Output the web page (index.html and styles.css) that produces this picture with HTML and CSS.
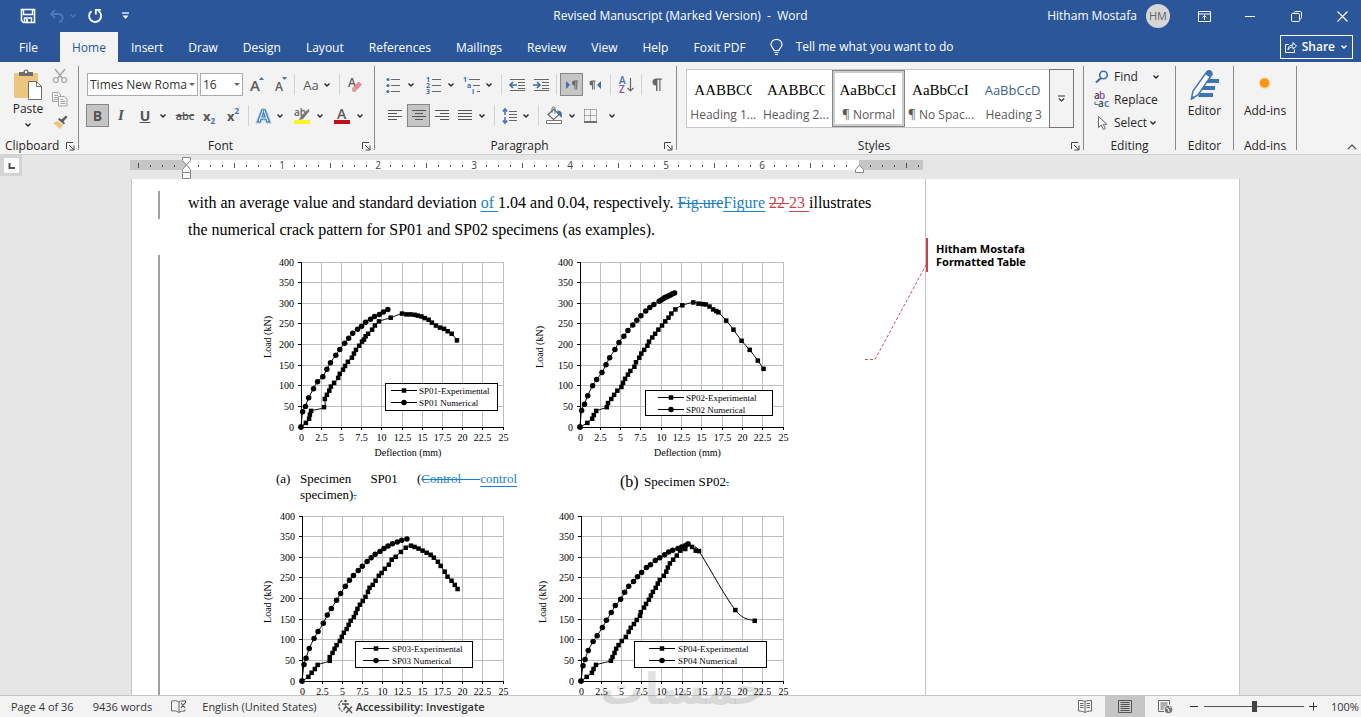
FILE: index.html
```html
<!DOCTYPE html>
<html lang="en">
<head>
<meta charset="utf-8">
<title>Revised Manuscript (Marked Version) - Word</title>
<link rel="stylesheet" href="styles.css">
</head>
<body>
<svg class="defs" aria-hidden="true">
  <symbol id="chev" viewBox="0 0 8 6"><path d="M1.5 1.5 4 4 6.5 1.5" fill="none" stroke="currentColor" stroke-width="1.4"/></symbol>
  <symbol id="launch" viewBox="0 0 9 9"><path d="M.5 7V.5H7M3 3l4.500 4.500M8 3.500V8H3.500" fill="none" stroke="#444"/></symbol>
</svg>

<header class="titlebar">
  <div class="quick">
    <button class="qbtn" aria-label="Save"><svg width="16" height="16" viewBox="0 0 16 16"><path d="M1.500 1.500h13v13h-11l-2-2z" fill="none" stroke="#fff" stroke-width="1.600"/><path d="M3.500 2v4.500h9V2M4.500 14v-4h7v4" fill="none" stroke="#fff" stroke-width="1.400"/><path d="M6 11h2v3H6z" fill="#fff"/></svg></button>
    <button class="qbtn undo" aria-label="Undo"><svg width="16" height="14" viewBox="0 0 16 14"><path d="M6 1 2 5l4 4M2 5h7c6 0 6 7 1 8" fill="none" stroke="#4f78b8" stroke-width="1.800"/></svg></button>
    <button class="qbtn mini" aria-label="Undo list"><svg width="8" height="6"><use href="#chev"/></svg></button>
    <button class="qbtn redo" aria-label="Repeat"><svg width="16" height="16" viewBox="0 0 16 16"><path d="M4.500 3.200A6 6 0 1 0 11.500 3" fill="none" stroke="#fff" stroke-width="1.900"/><path d="M8.800 6.500V1.800h5" fill="none" stroke="#fff" stroke-width="1.800"/></svg></button>
    <button class="qbtn custom" aria-label="Customize"><svg width="7" height="8" viewBox="0 0 7 8"><path d="M0 1h7" stroke="#fff" stroke-width="1.300"/><path d="M.5 3.500h6L3.500 7z" fill="#fff"/></svg></button>
  </div>
  <h1 class="doctitle">Revised Manuscript (Marked Version)&nbsp; -&nbsp; Word</h1>
  <div class="winctl">
    <span class="user">Hitham Mostafa</span><span class="avatar">HM</span>
    <button class="wbtn" aria-label="Ribbon display"><svg width="13" height="11" viewBox="0 0 13 11"><path d="M.5.5h12v10H.5zM.5 3h12M6.500 9V4.500M4.500 6.500l2-2 2 2" fill="none" stroke="#fff"/></svg></button>
    <button class="wbtn" aria-label="Minimize"><svg width="11" height="11" viewBox="0 0 11 11"><path d="M0 5.500h10" stroke="#fff"/></svg></button>
    <button class="wbtn" aria-label="Restore"><svg width="11" height="11" viewBox="0 0 11 11"><rect x=".5" y="2.500" width="8" height="8" rx="1" fill="none" stroke="#fff"/><path d="M3 2.500C3 1 3.500.5 4.500.5H9c1 0 1.500.5 1.500 1.500v4.500c0 1-.5 1.500-2 1.500" fill="none" stroke="#fff"/></svg></button>
    <button class="wbtn close" aria-label="Close"><svg width="11" height="11" viewBox="0 0 11 11"><path d="M.5.5l10 10M10.500.5l-10 10" stroke="#fff" stroke-width="1.100"/></svg></button>
  </div>
</header>

<nav class="tabs">
  <button class="tab file">File</button>
  <button class="tab on">Home</button>
  <button class="tab">Insert</button>
  <button class="tab">Draw</button>
  <button class="tab">Design</button>
  <button class="tab">Layout</button>
  <button class="tab">References</button>
  <button class="tab">Mailings</button>
  <button class="tab">Review</button>
  <button class="tab">View</button>
  <button class="tab">Help</button>
  <button class="tab">Foxit PDF</button>
  <button class="tell"><svg width="13" height="17" viewBox="0 0 13 17"><path d="M4 11.500C4 9 1 8.500 1 5.500a5.300 5 0 0 1 11 0C12 8.500 9 9 9 11.500zM4.500 13.500h4M5 15.500h3" fill="none" stroke="#fff" stroke-width="1.200"/></svg>Tell me what you want to do</button>
  <button class="share"><svg width="12" height="12" viewBox="0 0 12 12"><path d="M3.500 3.500h-3v8h9v-3M3 9c0-3.500 2-5 5-5V1.500L11.500 5 8 8V6C6 6 4 6.500 3 9z" fill="none" stroke="#fff"/></svg>Share<svg width="8" height="6"><use href="#chev"/></svg></button>
</nav>

<section class="ribbon">
  <div class="group clip">
    <div class="clipbody">
      <button class="paste"><svg width="30" height="31" viewBox="0 0 30 31"><rect x="1" y="4" width="24" height="25" rx="1" fill="#ecc67f"/><path d="M6 7V3h4.500a2.500 2.500 0 0 1 5 0H20v4z" fill="#6d6d6d"/><circle cx="13" cy="3" r="1.200" fill="#f3f3f3"/><path d="M15.500 12.500h8l5 5v13h-13z" fill="#fff" stroke="#6d6d6d"/><path d="M23.500 12.500v5h5" fill="none" stroke="#6d6d6d"/></svg>Paste<svg width="8" height="6"><use href="#chev"/></svg></button>
      <div class="clipside">
        <button aria-label="Cut"><svg width="16" height="16" viewBox="0 0 16 16"><path d="M3 1l7.500 9.500M13 1 5.500 10.500" stroke="#a5a5a5" stroke-width="1.500"/><circle cx="3.800" cy="12" r="2.500" fill="none" stroke="#a5a5a5" stroke-width="1.200"/><circle cx="12.200" cy="12" r="2.500" fill="none" stroke="#a5a5a5" stroke-width="1.200"/></svg></button>
        <button aria-label="Copy"><svg width="16" height="15" viewBox="0 0 16 15"><path d="M.5.5h6l2 2v7h-8z" fill="#f3f3f3" stroke="#a5a5a5"/><path d="M2 3.500h4M2 5.500h4M2 7.500h4" stroke="#a5a5a5"/><path d="M6.500 4.500h6l2.500 2.500v7H6.500z" fill="#f3f3f3" stroke="#a5a5a5"/><path d="M8.500 7.500h3M8.500 9.500h5M8.500 11.500h5" stroke="#a5a5a5"/></svg></button>
        <button aria-label="Format Painter"><svg width="16" height="14" viewBox="0 0 16 14"><path d="M1 8l5-2 5 4-3 4z" fill="#ecc67f"/><path d="M6 4.500l6 5 1-1.500-1.500-1.500L15.500 2 14 .5 9.500 4.500 7.500 3z" fill="#5d5d5d"/></svg></button>
      </div>
    </div>
    <div class="glabel"><span>Clipboard</span><svg width="9" height="9"><use href="#launch"/></svg></div>
  </div>

  <div class="group font">
    <div class="rows">
      <div class="row">
        <label class="combo name"><select aria-label="Font"><option>Times New Roma</option></select></label>
        <label class="combo size"><select aria-label="Font size"><option>16</option></select></label>
        <button class="ib" aria-label="Grow font"><svg width="16" height="18" viewBox="0 0 16 18"><text x="1" y="15" class="ico15">A</text><path d="M10 4l2.500-3L15 4z" fill="#3f6fb0"/></svg></button>
        <button class="ib" aria-label="Shrink font"><svg width="16" height="18" viewBox="0 0 16 18"><text x="2" y="15" class="ico12">A</text><path d="M9 1l2.500 3L14 1z" fill="#3f6fb0"/></svg></button>
        <i class="sep flush"></i>
        <button class="ib case"><span>Aa</span><svg width="8" height="6"><use href="#chev"/></svg></button>
        <i class="sep"></i>
        <button class="ib" aria-label="Clear formatting"><svg width="16" height="18" viewBox="0 0 16 18"><text x="1" y="11" class="ico12">A</text><path d="M5 12.500l6.500-7 3.500 3-7 7.500-2.500-.5z" fill="#e8899a"/><path d="M5 12.500l2-2 3 3-2 2.500-2.500-.5z" fill="#d8a0aa"/></svg></button>
      </div>
      <div class="row">
        <button class="ib on"><b>B</b></button>
        <button class="ib ital"><i>I</i></button>
        <button class="ib und"><u>U</u></button>
        <button class="cv" aria-label="Underline style"><svg width="8" height="6"><use href="#chev"/></svg></button>
        <button class="ib gap strike"><s>abc</s></button>
        <button class="ib idx">x<sub>2</sub></button>
        <button class="ib idx">x<sup>2</sup></button>
        <i class="sep"></i>
        <button class="ib nar" aria-label="Text effects"><svg width="15" height="16" viewBox="0 0 15 16"><path d="M1.500 14 6 2h3l4.500 12h-2.500l-1-3h-5l-1 3zM5.800 9h3.400L7.500 4z" fill="#fff" stroke="#a9c8e8" stroke-width="3"/><path d="M1.500 14 6 2h3l4.500 12h-2.500l-1-3h-5l-1 3zM5.800 9h3.400L7.500 4z" fill="#fff" stroke="#3d78b8" stroke-width="1.200"/></svg></button>
        <button class="cv" aria-label="Effects list"><svg width="8" height="6"><use href="#chev"/></svg></button>
        <button class="ib gap" aria-label="Highlight"><svg width="18" height="18" viewBox="0 0 18 18"><text x="1" y="9" class="ico10">ab</text><path d="M15.500 2 8 9l-2 4 4-1 6.500-8z" fill="#777"/><path d="M1 13h16v4H1z" fill="#fdf424"/></svg></button>
        <button class="cv" aria-label="Highlight colors"><svg width="8" height="6"><use href="#chev"/></svg></button>
        <button class="ib gap" aria-label="Font color"><svg width="18" height="18" viewBox="0 0 18 18"><text x="4" y="12" class="ico14">A</text><path d="M1 13h16v4H1z" fill="#c00f14"/></svg></button>
        <button class="cv" aria-label="Font colors"><svg width="8" height="6"><use href="#chev"/></svg></button>
      </div>
    </div>
    <div class="glabel"><span>Font</span><svg width="9" height="9"><use href="#launch"/></svg></div>
  </div>

  <div class="group para">
    <div class="rows">
      <div class="row">
        <button class="ib" aria-label="Bullets"><svg width="14" height="16" viewBox="0 0 14 16"><path d="M5 2.500h9M5 8.500h9M5 14.500h9" stroke="#666"/><circle cx="2" cy="2.500" r="1.500" fill="#3f6fb0"/><circle cx="2" cy="8.500" r="1.500" fill="#3f6fb0"/><circle cx="2" cy="14.500" r="1.500" fill="#3f6fb0"/></svg></button>
        <button class="cv" aria-label="Bullet library"><svg width="8" height="6"><use href="#chev"/></svg></button>
        <button class="ib gap" aria-label="Numbering"><svg width="15" height="18" viewBox="0 0 15 18"><path d="M6 3.500h9M6 9.500h9M6 15.500h9" stroke="#666"/><g class="num"><text x="0" y="6">1</text><text x="0" y="12">2</text><text x="0" y="18">3</text></g></svg></button>
        <button class="cv" aria-label="Numbering library"><svg width="8" height="6"><use href="#chev"/></svg></button>
        <button class="ib gap nar" aria-label="Multilevel list"><svg width="18" height="18" viewBox="0 0 18 18"><path d="M6 3.500h11M10 9.500h7M14 15.500h3" stroke="#666"/><g class="num"><text x="0" y="6">1</text><text x="4" y="12">a</text><text x="9" y="18">i</text></g></svg></button>
        <button class="cv" aria-label="Multilevel library"><svg width="8" height="6"><use href="#chev"/></svg></button>
        <i class="sep wide"></i>
        <button class="ib" aria-label="Decrease indent"><svg width="17" height="14" viewBox="0 0 17 14"><path d="M1 1.500h15M9 4.500h7M9 7.500h7M9 10.500h7M1 12.500h15" stroke="#666"/><path d="M1 7h7M4 4 1 7l3 3" fill="none" stroke="#3f6fb0" stroke-width="1.700"/></svg></button>
        <button class="ib" aria-label="Increase indent"><svg width="17" height="14" viewBox="0 0 17 14"><path d="M1 1.500h15M9 4.500h7M9 7.500h7M9 10.500h7M1 12.500h15" stroke="#666"/><path d="M0 7h7M4 4l3 3-3 3" fill="none" stroke="#3f6fb0" stroke-width="1.700"/></svg></button>
        <i class="sep"></i>
        <button class="ib on" aria-label="Left to right"><svg width="14" height="12" viewBox="0 0 14 12"><path d="M1 2v8l4-4z" fill="#3f6fb0"/><path d="M9.500 6.500a2.500 2.500 0 0 1 0-5H13v1h-.8v8h-1v-8h-.7v8h-1z" fill="#666"/></svg></button>
        <button class="ib" aria-label="Right to left"><svg width="14" height="12" viewBox="0 0 14 12"><path d="M13 2v8L9 6z" fill="#3f6fb0"/><path d="M4 6.500a2.500 2.500 0 0 1 0-5h3.500v1h-.8v8h-1v-8H5v8H4z" fill="#666"/></svg></button>
        <i class="sep"></i>
        <button class="ib" aria-label="Sort"><svg width="15" height="18" viewBox="0 0 15 18"><text x="0" y="8" class="sa">A</text><text x="0" y="17" class="sz">Z</text><path d="M11.500 2v13M8.500 12l3 3 3-3" fill="none" stroke="#666" stroke-width="1.200"/></svg></button>
        <i class="sep"></i>
        <button class="ib" aria-label="Show marks"><svg width="12" height="13" viewBox="0 0 12 13"><path d="M5 7.500A3.500 3.500 0 0 1 5 .5h6v1.200H9.500V13H8.300V1.700H6.500V13H5z" fill="#666"/></svg></button>
      </div>
      <div class="row inset">
        <button class="ib" aria-label="Align left"><svg width="14" height="13" viewBox="0 0 14 13"><path d="M0 1.500h14M0 4.500h9M0 7.500h14M0 10.500h9" stroke="#555"/></svg></button>
        <button class="ib on" aria-label="Center"><svg width="14" height="13" viewBox="0 0 14 13"><path d="M0 1.500h14M3 4.500h8M0 7.500h14M3 10.500h8" stroke="#555"/></svg></button>
        <button class="ib" aria-label="Align right"><svg width="14" height="13" viewBox="0 0 14 13"><path d="M0 1.500h14M5 4.500h9M0 7.500h14M5 10.500h9" stroke="#555"/></svg></button>
        <button class="ib nar" aria-label="Justify"><svg width="14" height="13" viewBox="0 0 14 13"><path d="M0 1.500h14M0 4.500h14M0 7.500h14M0 10.500h14" stroke="#555"/></svg></button>
        <button class="cv" aria-label="Justify options"><svg width="8" height="6"><use href="#chev"/></svg></button>
        <i class="sep wide"></i>
        <button class="ib nar" aria-label="Line spacing"><svg width="15" height="16" viewBox="0 0 15 16"><path d="M7 3.500h8M7 6.500h8M7 9.500h8M7 12.500h8" stroke="#666"/><path d="M3 1v6M3 9v6M.8 3.500 3 1l2.200 2.500M.8 12.500 3 15l2.200-2.500" fill="none" stroke="#3f6fb0" stroke-width="1.500"/></svg></button>
        <button class="cv" aria-label="Spacing options"><svg width="8" height="6"><use href="#chev"/></svg></button>
        <i class="sep wide"></i>
        <button class="ib" aria-label="Shading"><svg width="17" height="17" viewBox="0 0 17 17"><path d="M2 7.500 8 2l5 5.500-5.500 5z" fill="#fff" stroke="#666" stroke-width="1.200"/><path d="M6 6V1.500a1.500 1.500 0 0 1 3 0V7" fill="none" stroke="#666"/><path d="M11 3.500c5 0 5.500 3 4.500 7.500l-2.500-3z" fill="#3f6fb0"/><path d="M.5 13.500h15v3H.5z" fill="#fff" stroke="#777"/></svg></button>
        <button class="cv" aria-label="Shading colors"><svg width="8" height="6"><use href="#chev"/></svg></button>
        <button class="ib" aria-label="Borders"><svg width="13" height="14" viewBox="0 0 13 14"><path d="M.5.5h12M.5 6.500h12M.5.5v12M6.500.5v12M12.500.5v12" fill="none" stroke="#666" stroke-dasharray="1 1"/><path d="M0 13h13" stroke="#444" stroke-width="1.500"/></svg></button>
        <button class="cv gap" aria-label="Border options"><svg width="8" height="6"><use href="#chev"/></svg></button>
      </div>
    </div>
    <div class="glabel"><span>Paragraph</span><svg width="9" height="9"><use href="#launch"/></svg></div>
  </div>

  <div class="group styles">
    <div class="gallery">
      <button class="style"><span class="prev">AABBCC</span><span class="sname">Heading 1...</span></button>
      <button class="style"><span class="prev">AABBCC</span><span class="sname">Heading 2...</span></button>
      <button class="style on"><span class="prev">AaBbCcI</span><span class="sname">¶ Normal</span></button>
      <button class="style"><span class="prev">AaBbCcI</span><span class="sname">¶ No Spac...</span></button>
      <button class="style"><span class="prev light">AaBbCcD</span><span class="sname">Heading 3</span></button>
      <button class="more" aria-label="More styles"><svg width="9" height="8" viewBox="0 0 9 8"><path d="M1 1h7M1.800 3.500l2.700 2.500 2.700-2.500" fill="none" stroke="#333" stroke-width="1.200"/></svg></button>
    </div>
    <div class="glabel"><span>Styles</span><svg width="9" height="9"><use href="#launch"/></svg></div>
  </div>

  <div class="group editing">
    <div class="elist">
      <button><svg width="16" height="14" viewBox="0 0 16 14"><circle cx="9.500" cy="5" r="3.800" fill="none" stroke="#3f6fb0" stroke-width="1.600"/><path d="M7 8l-5 4.500" stroke="#3f6fb0" stroke-width="2.200"/></svg><span class="find">Find</span><svg width="8" height="6"><use href="#chev"/></svg></button>
      <button><svg width="16" height="16" viewBox="0 0 16 16"><text x="0" y="7" class="ra">a</text><text x="5" y="7" class="rb">b</text><text x="4" y="15" class="ra">a</text><text x="10" y="15" class="rc">c</text><path d="M1 9.500v3h3" fill="none" stroke="#3f6fb0"/></svg>Replace</button>
      <button><svg width="16" height="16" viewBox="0 0 16 16"><path d="M4.500 1.500v11l2.800-2.500 2 4.500 2-1-2-4.300h3.500z" fill="#fff" stroke="#666"/></svg>Select<svg class="near" width="8" height="6"><use href="#chev"/></svg></button>
    </div>
    <div class="glabel"><span>Editing</span></div>
  </div>

  <div class="group editor">
    <button class="big"><svg width="32" height="32" viewBox="0 0 32 32"><path d="M17 10h13v4H15zM14 17h12v4H12zM11 24h13v4H9z" fill="#3f74b5"/><path d="M2.500 29.500 4 22 18 2.500c3-1.500 5 0 5 3L9 26z" fill="#fff" stroke="#3f74b5" stroke-width="1.500"/><path d="M16 5l2.500-3.500c3-1 5 .5 5 3.500L21 8.500z" fill="#3f74b5"/><path d="M2 31l1-4 3 2z" fill="#3f74b5"/></svg>Editor</button>
    <div class="glabel"><span>Editor</span></div>
  </div>

  <div class="group addins">
    <button class="big"><svg width="32" height="32" viewBox="0 0 32 32"><circle cx="15.500" cy="14" r="5.800" fill="#fbd6a0"/><circle cx="15.500" cy="14" r="4.600" fill="#f99514"/></svg>Add-ins</button>
    <div class="glabel"><span>Add-ins</span></div>
  </div>
  <button class="collapse" aria-label="Collapse ribbon"><svg width="10" height="6" viewBox="0 0 10 6"><path d="M.8 5.200 5 1l4.200 4.200" fill="none" stroke="#444" stroke-width="1.200"/></svg></button>
</section>

<div class="rulerbar">
  <button class="tabsel" aria-label="Tab selector"><svg width="15" height="15" viewBox="0 0 15 15"><rect width="15" height="15" fill="#fafafa"/><path d="M5.500 5v5H11" fill="none" stroke="#555" stroke-width="2"/></svg></button>
  <svg class="ruler" id="ruler" width="794" height="24"></svg>
</div>

<main class="desk">
  <article class="page">
    <div class="body">
      <p class="text">with an average value and standard deviation <ins class="blue">of </ins>1.04 and 0.04, respectively. <del class="blue">Fig.ure</del><ins class="blue">Figure</ins> <del class="red">22 </del><ins class="red">23 </ins>illustrates the numerical crack pattern for SP01 and SP02 specimens (as examples).</p>
      <div class="figures">
        <svg class="chart" data-chart="0" width="280" height="210"></svg>
        <svg class="chart" data-chart="1" width="280" height="210"></svg>
        <div class="caption"><span>(a)</span><p>Specimen SP01 (<del class="blue">Control </del><ins class="blue">control</ins> specimen)<del class="blue">.</del></p></div>
        <div class="caption b"><span>(b)</span><p>Specimen SP02<del class="blue">.</del></p></div>
        <svg class="chart" data-chart="2" width="280" height="210"></svg>
        <svg class="chart" data-chart="3" width="280" height="210"></svg>
      </div>
    </div>
    <aside class="markup">
      <svg class="leader" width="64" height="100" viewBox="0 0 64 100"><path d="M0 97.500h10L61 3" fill="none" stroke="#c8505a" stroke-dasharray="3 2"/></svg>
      <div class="note">Hitham Mostafa<br>Formatted Table</div>
    </aside>
  </article>
</main>

<footer class="status">
  <span class="pg">Page 4 of 36</span>
  <span class="wc">9436 words</span>
  <button class="proof" aria-label="Proofing"><svg width="15" height="13" viewBox="0 0 15 13"><path d="M8 12.500V2C6 .5 3 .5.5 1v10c3-.5 5.500 0 7.500 1.500 1-1 3-1.500 6-1.500V9.500M8 2c1-.8 2-1 3-1" fill="none" stroke="#666"/><path d="M10 3l4 5M14 3l-4 5M11 1h3.500v2" fill="none" stroke="#555" stroke-width="1.200"/></svg></button>
  <span class="lang">English (United States)</span>
  <button class="acc"><svg width="16" height="15" viewBox="0 0 16 15"><path d="M5.500 1.500A6 6 0 0 0 5.500 12.500" fill="none" stroke="#555" stroke-width="1.200" stroke-dasharray="3 1"/><circle cx="8.500" cy="2" r="1.300" fill="#555"/><path d="M5 5h7M8.500 5v3l-2 3M9 7.500l6 6.500M15 7.500l-6 6.500" fill="none" stroke="#555" stroke-width="1.400"/></svg>Accessibility: Investigate</button>
  <div class="views">
    <button aria-label="Read mode"><svg width="14" height="13" viewBox="0 0 14 13"><path d="M7 12.500V1.500C5 .5 3 .5.5.5v10.500c3 0 5 .5 6.500 1.500 1.500-1 3.500-1.500 6.500-1.500V.5C11 .5 9 .5 7 1.500M2 3.500h3.500M2 5.500h3.500M2 7.500h3.500M8.500 3.500H12M8.500 5.500H12M8.500 7.500H12" fill="none" stroke="#666"/></svg></button>
    <button class="on" aria-label="Print layout"><svg width="14" height="13" viewBox="0 0 14 13"><path d="M.5.5h13v12H.5zM2.500 2.500h9M2.500 4.500h9M2.500 6.500h9M2.500 8.500h9M2.500 10.500h9" fill="none" stroke="#555"/></svg></button>
    <button aria-label="Web layout"><svg width="15" height="14" viewBox="0 0 15 14"><path d="M6 11.500H.5v-11h11v4M2.500 3h7M2.500 5h7M2.500 7h4M2.500 9h3" fill="none" stroke="#666"/><circle cx="10.500" cy="9.500" r="3.800" fill="#777"/><path d="M8 8l2.500 1 .5 3M11 6.500l2 1.500" fill="none" stroke="#f3f3f3"/></svg></button>
  </div>
  <button class="zb" aria-label="Zoom out"><svg width="9" height="9" viewBox="0 0 9 9"><path d="M0 4.500h8" stroke="#333"/></svg></button>
  <input class="zoom" type="range" min="0" max="100" value="50" aria-label="Zoom">
  <button class="zb" aria-label="Zoom in"><svg width="9" height="9" viewBox="0 0 9 9"><path d="M0 4.500h8M4.500.5v8" stroke="#333"/></svg></button>
  <span class="pct">100%</span>
</footer>
<div class="watermark" lang="ar" dir="rtl">خمسات</div>
<script src="script.js"></script>
</body>
</html>
```
FILE: styles.css
```css
* { box-sizing: border-box; }
body {
  margin: 0;
  height: 100vh;
  display: flex;
  flex-direction: column;
  overflow: hidden;
  font: 12px/16px "Open Sans", "Noto Sans", sans-serif;
  color: #333;
  background: #e6e6e6;
}
button {
  margin: 0;
  padding: 0;
  border: 0;
  background: none;
  font: inherit;
  color: inherit;
  display: flex;
  align-items: center;
  justify-content: center;
  white-space: nowrap;
}
svg { display: block; flex: none; overflow: visible; }
.defs { position: absolute; width: 0; height: 0; overflow: hidden; }

/* title bar */
.titlebar {
  display: grid;
  grid-template-columns: 1fr auto 1fr;
  flex: none;
  height: 32px;
  align-items: center;
  background: #2b579a;
  color: #fff;
}
.quick { display: flex; align-items: center; padding-left: 16px; height: 30px; }
.qbtn { width: 24px; height: 24px; }
.qbtn.undo { margin-left: 5px; }
.qbtn.mini { width: 8px; color: #4f78b8; }
.qbtn.redo { margin-left: 6px; }
.qbtn.custom { margin-left: 6px; }
.doctitle { margin: 0; font-size: 12px; font-weight: 400; }
.winctl { display: flex; justify-content: flex-end; align-items: center; height: 30px; }
.user { margin-right: 9px; }
.avatar {
  width: 24px;
  height: 24px;
  margin-right: 11px;
  border-radius: 50%;
  background: #d6d6d6;
  color: #666;
  font-size: 11px;
  line-height: 24px;
  text-align: center;
}
.wbtn { width: 46px; height: 26px; }
.wbtn.close { width: 42px; padding-left: 4px; }

/* ribbon tabs */
.tabs {
  display: flex;
  flex: none;
  gap: 1px;
  height: 30px;
  padding: 0 8px 0 7px;
  background: #2b579a;
  color: #fff;
}
.tab { height: 30px; padding: 2px 12px 0; }
.tab.file { margin-right: 9px; }
.tab.on { background: #f3f3f3; color: #2b579a; }
.tell { gap: 13px; margin-left: 11px; }
.share {
  align-self: center;
  gap: 5px;
  height: 24px;
  margin-left: auto;
  padding: 0 4px;
  border: 1px solid #fff;
  font-weight: 600;
}

/* ribbon */
.ribbon {
  display: flex;
  flex: none;
  height: 93px;
  padding: 4px 0;
  background: #f3f3f3;
  border-bottom: 1px solid #d2d2d2;
  color: #262626;
}
.group {
  display: flex;
  flex-direction: column;
  justify-content: space-between;
  flex: none;
  border-right: 1px solid #8a8a8a;
}
.glabel { display: flex; align-items: center; height: 8px; padding: 0 3px 0 0; }
.glabel span { flex: 1; text-align: center; }
.clip { width: 79px; }
.clip .glabel { padding-left: 5px; }
.clip .glabel span { text-align: left; }
.font { width: 296px; }
.para { width: 302px; }
.styles { width: 407px; }
.editing { width: 92px; }
.editor { width: 58px; }
.addins { width: 63px; }
.editing .glabel, .editor .glabel, .addins .glabel { padding: 0; }

.clipbody { display: flex; gap: 8px; padding: 2px 0 0 12px; }
.paste { flex-direction: column; width: 32px; gap: 1px; }
.paste svg:last-child { margin-top: 4px; }
.clipside { display: flex; flex-direction: column; gap: 8px; }

.rows { display: flex; flex-direction: column; gap: 8px; padding: 7px 0 0 7px; }
.row { display: flex; align-items: center; height: 23px; }
.row.inset { padding-left: 2px; }
.para .rows { padding-left: 6px; }
.ib { width: 24px; height: 23px; color: #555; }
.ib.nar { width: 22px; }
.ib.on { width: 23px; background: #c5c5c5; border: 1px solid #868686; }
.ib.gap { margin-left: 4px; }
.cv { width: 12px; height: 23px; }
.cv.gap { margin-left: 4px; }
.sep { width: 1px; height: 21px; margin: 0 3px; background: #d2d2d2; }
.sep.flush { margin-left: 1px; }
.sep.wide { margin-left: 6px; }
.combo { position: relative; height: 23px; margin-right: 2px; }
.combo.name { width: 111px; margin-left: 1px; }
.combo.size { width: 43px; }
.combo select {
  width: 100%;
  height: 23px;
  padding: 0 0 0 2px;
  border: 1px solid #ababab;
  border-radius: 0;
  background: #fff;
  appearance: none;
  font: inherit;
  color: #333;
}
.combo::after {
  content: "";
  position: absolute;
  right: 3px;
  top: 10px;
  border: 3px solid transparent;
  border-top-color: #666;
}
.case { width: 38px; gap: 4px; font-size: 13px; }
.case svg { color: #262626; }
.ital { font: italic bold 15px "Liberation Serif", serif; }
.ib b, .und { font-size: 14px; font-weight: 700; }
.strike { font-size: 11px; font-weight: 600; }
.idx { font-size: 13px; font-weight: 700; }
.idx sub, .idx sup { font-size: 8px; line-height: 8px; color: #3f6fb0; }
.idx sub { margin-top: 10px; }
.idx sup { margin-bottom: 10px; }
.ico15, .ico14, .ico12, .ico10 { fill: #5c5c5c; font-weight: 600; font-size: 15px; }
.ico14 { font-size: 14px; }
.ico12 { font-size: 12px; }
.ico10 { font-size: 10px; }
.num { fill: #3f6fb0; font-size: 7px; font-weight: 700; }
.sa, .sz { font-size: 10px; font-weight: 600; fill: #3f6fb0; }
.sz { fill: #8e4aa8; }

.gallery {
  display: flex;
  height: 59px;
  margin: 3px 9px 0;
  border: 1px solid #c8c8c8;
  background: #fff;
}
.style {
  flex: 1;
  min-width: 0;
  flex-direction: column;
  gap: 8px;
  padding: 6px 0 0;
  border: 3px solid transparent;
}
.style.on { border-color: #cdcdcd; outline: 1px solid #868686; outline-offset: -1px; }
.prev {
  width: 58px;
  overflow: hidden;
  text-align: left;
  font: 15px/18px "Liberation Serif", serif;
  color: #000;
}
.prev.light { font: 13px/18px "Open Sans", sans-serif; color: #3b5f8a; }
.sname { color: #595959; }
.more { width: 25px; margin: -1px; border: 1px solid #777; background: #f3f3f3; }

.elist { display: flex; flex-direction: column; gap: 7px; padding: 3px 0 0 10px; }
.elist button { justify-content: flex-start; gap: 4px; height: 16px; }
.elist .find { margin-right: 10px; }
.elist .near { margin-left: -2px; }
.ra, .rb, .rc { font-size: 10px; font-weight: 600; fill: #444; }
.rb { fill: #8e4aa8; }
.rc { fill: #3f6fb0; }
.big { flex-direction: column; gap: 2px; padding-top: 3px; }
.collapse { margin-left: auto; align-self: flex-end; width: 18px; height: 6px; }

/* ruler */
.rulerbar { display: flex; flex: none; height: 24px; }
.tabsel { width: 22px; height: 21px; background: #d4d4d4; }
.ruler { margin-left: 108px; }
.ruler text { font-size: 10px; fill: #444; text-anchor: middle; }

/* document */
.desk { flex: 1; min-height: 0; padding: 0 121px 0 131px; overflow: hidden; }
.page {
  display: grid;
  grid-template-columns: 793px 1fr;
  background: #fff;
  border-left: 1px solid #c6c6c6;
  border-right: 1px solid #c6c6c6;
}
.body { padding-top: 10px; font: 16px/27px "Liberation Serif", serif; color: #000; }
.text { position: relative; margin: 0 48px 0 56px; }
.text::before {
  content: "";
  position: absolute;
  left: -30px;
  top: 2px;
  width: 2px;
  height: 28px;
  background: #a0a0a0;
}
.blue { color: #1a7fc4; }
.red { color: #c8434a; }
ins { text-underline-offset: 3px; text-decoration-thickness: 1px; }
del { text-decoration-thickness: 1px; }
.figures {
  display: grid;
  grid-template-columns: 280px 280px;
  margin: 12px 0 0 26px;
  padding-left: 90px;
  border-left: 2px solid #a0a0a0;
}
.chart text { font: 10px "Liberation Serif", serif; fill: #000; }
.chart .tx { text-anchor: middle; }
.chart .ty { text-anchor: end; }
.chart .key { font-size: 9px; }
.caption {
  display: flex;
  align-items: flex-start;
  height: 44px;
  padding: 6px 13px 6px 26px;
  font-size: 13px;
  line-height: 16px;
}
.caption span { width: 24px; }
.caption p { flex: 1; margin: 0; text-align: justify; }
.caption.b { padding-left: 90px; align-items: center; padding-bottom: 16px; }
.caption.b span { font-size: 16px; }
.markup { position: relative; border-left: 1px solid #c6c6c6; padding-top: 59px; }
.leader { position: absolute; left: -61px; top: 83px; }
.note {
  padding: 4px 0 4px 8px;
  border-left: 2px solid #c8434a;
  font: bold 11px/13px "Noto Sans", sans-serif;
  color: #000;
}

/* status bar */
.status {
  display: flex;
  flex: none;
  align-items: center;
  height: 22px;
  padding: 0 2px 0 11px;
  border-top: 1px solid #c6c6c6;
  background: #f3f3f3;
  font-size: 11px;
  color: #333;
}
.wc { margin-left: 19px; }
.proof { margin-left: 19px; }
.lang { margin-left: 16px; }
.acc { margin-left: 20px; gap: 3px; font-weight: 600; }
.views { display: flex; margin-left: auto; }
.views button { width: 40px; height: 21px; }
.views .on { background: #c6c6c6; }
.zb { width: 9px; margin: 0 5px; }
.zoom { width: 100px; height: 14px; margin: 0; appearance: none; background: linear-gradient(#555, #555) center / 100% 1px no-repeat; }
.zoom::-webkit-slider-thumb { appearance: none; width: 5px; height: 11px; background: #444; }
.pct { width: 28px; margin-left: 8px; white-space: nowrap; }

.watermark {
  position: absolute;
  left: 600px;
  bottom: 0;
  font: bold 44px/56px "DejaVu Sans", sans-serif;
  color: rgba(120, 120, 120, 0.22);
  pointer-events: none;
}
```
FILE: script.js
```js
const NS = "http://www.w3.org/2000/svg";
function add(parent, tag, attrs, text) {
  const el = document.createElementNS(NS, tag);
  for (const k in attrs) el.setAttribute(k, attrs[k]);
  if (text !== undefined) el.textContent = text;
  parent.appendChild(el);
  return el;
}

/* Ruler: 96 units per inch, zero at the left margin */
const ruler = document.getElementById("ruler");
const zero = 56, end = 729;
add(ruler, "rect", { x: 0, y: 5, width: 793, height: 10, fill: "#c6c6c6" });
add(ruler, "rect", { x: zero, y: 5, width: end - zero, height: 10, fill: "#fff" });
for (let i = -4; i <= 61; i++) {
  const x = zero + i * 12;
  if (i === 0 || Math.abs(x - end) < 6) continue;
  if (i % 8 === 0) add(ruler, "text", { x: x, y: 14 }, i / 8);
  else if (i % 4 === 0) add(ruler, "rect", { x: x, y: 8, width: 1, height: 5, fill: "#555" });
  else add(ruler, "rect", { x: x, y: 10, width: 1, height: 2, fill: "#555" });
}
const mark = { fill: "#fff", stroke: "#888" };
add(ruler, "path", { d: "M52.500 2.500h8v3l-4 4.500-4-4.500z", ...mark });
add(ruler, "path", { d: "M56.500 10l4 4.500v3h-8v-3z", ...mark });
add(ruler, "path", { d: "M52.500 17.500h8v6h-8z", ...mark });
add(ruler, "path", { d: "M729.500 10l4 4.500v3h-8v-3z", ...mark });

/* Load-deflection curves, as deflection (mm), load (kN) pairs */
const charts = [
  { name: "SP01", ox: 51, lab: [18, 82], box: [135, 128, 112, 28], key: 141, txt: 169,
    exp: [0,0,.6,10,1,20,1.1,30,1.25,39,2.85,48,2.95,68,3.2,78,3.5,88,3.7,98,4.1,107,4.6,119,4.8,129,5.2,139,5.45,148,5.8,158,6.3,168,6.55,178,6.8,187,7.2,197,7.55,207,7.8,212,8,220,8.3,226,8.8,236,9.15,246,9.65,256,11.1,265,12.5,275,13.05,273,13.55,273,14.05,272,14.45,270,14.9,268,15.3,264,15.8,260,16.2,253,16.7,246,17.2,241,17.7,238,18.15,232,18.65,226,19.3,210],
    num: [0,0,.2,37,.55,50,.95,71,1.55,93,2.05,110,2.7,122,3.2,140,3.65,156,4.3,174,4.8,188,5.4,203,5.9,215,6.4,227,7,237,7.5,244,8,254,8.6,261,9.1,268,9.7,273,10.2,279,10.75,285] },
  { name: "SP02", ox: 50, lab: [10, 92], box: [115, 135, 127, 26], key: 128, txt: 156,
    exp: [0,0,.9,10,1.5,20,1.7,29,2,39,3.3,48,3.45,58,3.85,68,4.2,78,4.6,88,5.1,97,5.3,107,5.55,117,5.9,127,6.2,136,6.7,146,6.9,157,7.3,168,7.55,178,7.9,187,8.3,197,8.5,207,8.9,217,9.25,226,9.65,236,10.1,246,10.5,256,10.9,265,11.25,275,11.75,285,12.6,295,13.95,302,14.6,299,15.1,298,15.5,297,15.95,292,16.4,285,16.8,281,17.05,278,18,258,18.9,236,19.9,209,20.9,187,21.9,161,22.6,141],
    num: [0,0,.2,40,.55,55,.95,76,1.55,100,2.05,115,2.7,132,3.2,151,3.65,168,4.3,188,4.8,205,5.4,220,5.9,234,6.5,247,7,259,7.5,270,8.1,281,8.6,290,9.1,297,9.75,305,10,308,10.25,311,10.45,314,10.7,316,10.95,318,11.15,320,11.4,323,11.65,325] },
  { name: "SP03", ox: 52, lab: [18, 93], box: [105, 132, 117, 27], key: 113, txt: 142,
    exp: [0,0,.8,10,1.2,20,1.6,29,1.95,39,3.45,49,3.45,58,3.8,68,4.05,78,4.3,87,4.7,97,4.95,107,5.2,117,5.55,126,5.8,136,6.05,146,6.45,155,6.7,165,6.9,175,7.2,185,7.55,194,7.9,204,8.2,216,8.4,226,8.8,233,9.15,243,9.55,255,9.9,262,10.3,272,10.8,282,11.15,294,11.65,301,12.3,313,12.9,323,13.55,328,14,325,14.5,321,15,316,15.5,311,16,306,16.4,299,16.9,289,17.25,279,17.75,265,18.1,253,18.6,243,19,233,19.35,223],
    num: [0,0,.25,40,.5,55,.9,79,1.5,103,2,120,2.65,140,3.15,160,3.65,176,4.3,196,4.8,212,5.4,230,5.9,244,6.4,256,7,268,7.5,278,8.1,290,8.6,299,9.1,307,9.7,314,10.2,321,10.7,327,11.25,333,11.85,337,12.4,341,13.05,344] },
  { name: "SP04", ox: 51, lab: [13, 93], box: [104, 132, 132, 27], key: 119, txt: 148,
    exp: [0,0,.7,10,1.35,20,1.55,29,1.85,39,3.7,49,3.9,58,4.15,68,4.35,78,4.65,87,5.05,97,5.55,107,5.9,119,6.15,129,6.55,138,6.9,148,7.3,158,7.4,167,7.8,178,8.05,187,8.4,197,8.65,207,8.9,216,9.25,226,9.5,236,9.75,245,10.25,255,10.55,265,10.75,275,11,285,11.4,294,11.85,304,12.3,316,12.9,320,13.25,332,13.75,325,14.2,316,14.6,315,19.1,172,21.5,146],
    num: [0,0,.25,37,.5,52,.9,74,1.5,96,2,110,2.65,130,3.15,147,3.75,166,4.25,183,4.9,198,5.4,215,5.9,230,6.5,241,7,253,7.5,263,8.1,275,8.6,282,9.2,292,9.75,299,10.35,306,10.85,313,11.35,317,12,321,12.45,325,12.9,328,13.25,332] }
];

function smooth(p) {
  let d = "M" + p[0];
  for (let i = 0; i < p.length - 1; i++) {
    const a = p[i - 1] || p[i], b = p[i], c = p[i + 1], e = p[i + 2] || c;
    d += ` C${b[0] + (c[0] - a[0]) / 6},${b[1] + (c[1] - a[1]) / 6} ${c[0] - (e[0] - b[0]) / 6},${c[1] - (e[1] - b[1]) / 6} ${c}`;
  }
  return d;
}
function square(s, x, y) { add(s, "rect", { x: x - 2.25, y: y - 2.25, width: 4.5, height: 4.5 }); }
function dot(s, x, y) { add(s, "circle", { cx: x, cy: y, r: 2.75 }); }

document.querySelectorAll("[data-chart]").forEach(svg => {
  const c = charts[svg.dataset.chart];
  const top = 7, bottom = 172, right = 253;
  const X = v => c.ox + v * (right - c.ox) / 25;
  const Y = v => bottom - v * (bottom - top) / 400;
  const snap = v => Math.floor(v) + 0.5;
  for (let v = 0; v <= 25; v += 2.5) {
    const x = snap(X(v));
    if (v) add(svg, "path", { d: `M${x} ${top}V${bottom}`, stroke: "#bdbdbd" });
    add(svg, "path", { d: `M${x} ${bottom}v3`, stroke: "#000" });
    add(svg, "text", { x: x, y: 186, class: "tx" }, v);
  }
  for (let v = 0; v <= 400; v += 50) {
    const y = snap(Y(v));
    if (v) add(svg, "path", { d: `M${c.ox} ${y}H${right}`, stroke: "#bdbdbd" });
    add(svg, "path", { d: `M${c.ox - 3} ${y}h3`, stroke: "#000" });
    add(svg, "text", { x: c.ox - 7, y: y + 3, class: "ty" }, v);
  }
  add(svg, "path", { d: `M${c.ox + .5} ${top}V${bottom + .5}H${right}`, stroke: "#000", fill: "none" });
  add(svg, "text", { x: (c.ox + right) / 2 + 6, y: 201, class: "tx" }, "Deflection (mm)");
  add(svg, "text", { transform: `translate(${c.lab[0] + 3} ${c.lab[1]}) rotate(-90)`, class: "tx" }, "Load (kN)");
  [[c.exp, square], [c.num, dot]].forEach(([data, draw]) => {
    const pts = [];
    for (let i = 0; i < data.length; i += 2) pts.push([X(data[i]), Y(data[i + 1])]);
    add(svg, "path", { d: smooth(pts), stroke: "#000", fill: "none" });
    pts.forEach(p => draw(svg, p[0], p[1]));
  });
  const [bx, by, bw, bh] = c.box;
  add(svg, "rect", { x: bx + .5, y: by + .5, width: bw, height: bh - 1, fill: "#fff", stroke: "#000" });
  [[square, "-Experimental", 7], [dot, " Numerical", 19]].forEach(([draw, label, dy]) => {
    const y = by + dy + .5;
    add(svg, "path", { d: `M${c.key} ${y}h26`, stroke: "#000" });
    draw(svg, c.key + 13, y);
    add(svg, "text", { x: c.txt, y: y + 3, class: "key" }, c.name + label);
  });
});
```
